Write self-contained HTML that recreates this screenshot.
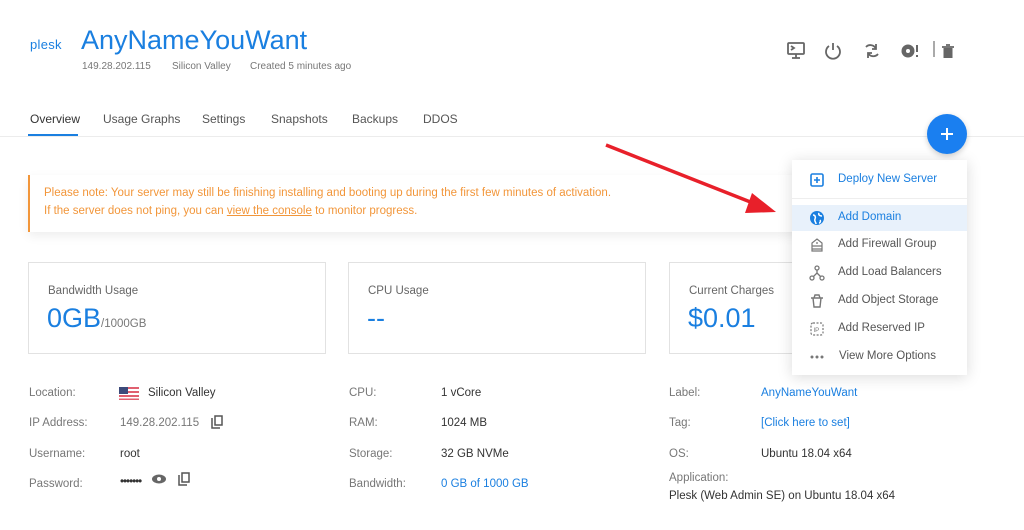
<!DOCTYPE html>
<html><head><meta charset="utf-8"><style>
*{margin:0;padding:0;box-sizing:border-box}
body{width:1024px;height:530px;overflow:hidden;background:#fff;font-family:"Liberation Sans",sans-serif;position:relative;color:#333}
.a{position:absolute;white-space:nowrap}
.g{color:#777}
.b{color:#1a7fe0}
.tab{position:absolute;top:112px;font-size:12px;color:#555}
.card{position:absolute;top:262px;width:298px;height:92px;border:1px solid #e2e2e2;background:#fff}
.card .l{position:absolute;left:19px;top:22px;font-size:11.5px;color:#666}
.card .v{position:absolute;left:18px;top:40px;font-size:27px;color:#1a7fe0}
.r{position:absolute;font-size:11.5px}
.lab{color:#777}
.menu{position:absolute;left:792px;top:160px;width:175px;height:215px;background:#fff;box-shadow:0 2px 14px rgba(0,0,0,.15)}
.mi{position:absolute;left:0;width:175px;height:26px;font-size:11.5px;color:#555}
.mi span{position:absolute;left:46px;top:6px}
.mi svg{position:absolute;left:17px;top:5px}
</style></head><body>
<div class="a b" style="left:30px;top:37px;font-size:13px;letter-spacing:.3px">plesk</div>
<div class="a b" style="left:81px;top:25px;font-size:27px">AnyNameYouWant</div>
<div class="a g" style="left:82px;top:61px;font-size:10px">149.28.202.115</div>
<div class="a g" style="left:172px;top:61px;font-size:10px">Silicon Valley</div>
<div class="a g" style="left:250px;top:61px;font-size:10px">Created 5 minutes ago</div>

<svg class="a" style="left:786px;top:41px" width="180" height="20" fill="none" stroke="#666" stroke-width="1.8">
<rect x="2" y="2" width="16" height="11" rx="1"/><path d="M10 13v4M6 17h8M5 5l3 2-3 2"/>
<path d="M43 5a7 7 0 1 0 8 0M47 2v7"/>
<path d="M80 6a6 6 0 0 1 10 2M92 13a6 6 0 0 1-10-1M90 3v5h-4M82 17v-5h4"/>
<circle cx="122" cy="10" r="6.5" fill="#666" stroke="none"/><circle cx="122" cy="10" r="2" fill="#fff" stroke="none"/><path d="M131 4v7M131 14v2" stroke-width="2"/>
<path d="M148 0v16" stroke="#555" stroke-width="1"/>
<path d="M156 6h12M160 4h4" /><rect x="157.5" y="7" width="9" height="10" fill="#666" stroke="none"/>
</svg>

<div class="tab" style="left:30px;color:#333">Overview</div>
<div class="tab" style="left:103px">Usage Graphs</div>
<div class="tab" style="left:202px">Settings</div>
<div class="tab" style="left:271px">Snapshots</div>
<div class="tab" style="left:352px">Backups</div>
<div class="tab" style="left:423px">DDOS</div>
<div class="a" style="left:0;top:136px;width:1024px;height:1px;background:#ececec"></div>
<div class="a" style="left:28px;top:134px;width:50px;height:2px;background:#1a7fe0"></div>

<div class="a" style="left:28px;top:175px;width:790px;height:57px;background:#fff;border-left:2px solid #f2963a;box-shadow:0 4px 10px rgba(0,0,0,.07);font-size:11.5px;color:#f2963a;line-height:18px;padding:9px 0 0 14px">Please note: Your server may still be finishing installing and booting up during the first few minutes of activation.<br>If the server does not ping, you can <u>view the console</u> to monitor progress.</div>

<div class="card" style="left:28px"><div class="l">Bandwidth Usage</div><div class="v">0GB<span style="font-size:11.5px;color:#777">/1000GB</span></div></div>
<div class="card" style="left:348px"><div class="l">CPU Usage</div><div class="v">--</div></div>
<div class="card" style="left:669px"><div class="l">Current Charges</div><div class="v">$0.01</div></div>

<div class="r lab" style="left:29px;top:387px">Location:</div>
<svg class="a" style="left:119px;top:387px" width="20" height="13"><rect width="20" height="13" fill="#fff"/><g fill="#e06070"><rect y="0" width="20" height="2"/><rect y="4" width="20" height="2"/><rect y="8" width="20" height="2"/><rect y="11.5" width="20" height="1.5"/></g><rect width="9" height="7" fill="#3c4a7a"/></svg>
<div class="r" style="left:148px;top:387px">Silicon Valley</div>
<div class="r lab" style="left:29px;top:417px">IP Address:</div>
<div class="r g" style="left:120px;top:417px">149.28.202.115</div>
<svg class="a" style="left:210px;top:415px" width="14" height="15" fill="none" stroke="#555" stroke-width="1.5"><path d="M2 3v10h8"/><rect x="5" y="1" width="7" height="9"/></svg>
<div class="r lab" style="left:29px;top:448px">Username:</div>
<div class="r" style="left:120px;top:448px">root</div>
<div class="r lab" style="left:29px;top:478px">Password:</div>
<div class="r" style="left:120px;top:476px;letter-spacing:-1px">•••••••</div>
<svg class="a" style="left:152px;top:474px" width="14" height="10"><ellipse cx="7" cy="5" rx="7" ry="4.5" fill="#666"/><circle cx="7" cy="5" r="2" fill="#fff"/></svg>
<svg class="a" style="left:177px;top:472px" width="14" height="15" fill="none" stroke="#555" stroke-width="1.5"><path d="M2 3v10h8"/><rect x="5" y="1" width="7" height="9"/></svg>

<div class="r lab" style="left:349px;top:387px">CPU:</div><div class="r" style="left:441px;top:387px">1 vCore</div>
<div class="r lab" style="left:349px;top:417px">RAM:</div><div class="r" style="left:441px;top:417px">1024 MB</div>
<div class="r lab" style="left:349px;top:448px">Storage:</div><div class="r" style="left:441px;top:448px">32 GB NVMe</div>
<div class="r lab" style="left:349px;top:478px">Bandwidth:</div><div class="r b" style="left:441px;top:478px">0 GB of 1000 GB</div>

<div class="r lab" style="left:669px;top:387px">Label:</div><div class="r b" style="left:761px;top:387px">AnyNameYouWant</div>
<div class="r lab" style="left:669px;top:417px">Tag:</div><div class="r b" style="left:761px;top:417px">[Click here to set]</div>
<div class="r lab" style="left:669px;top:448px">OS:</div><div class="r" style="left:761px;top:448px">Ubuntu 18.04 x64</div>
<div class="r lab" style="left:669px;top:472px">Application:</div>
<div class="r" style="left:669px;top:490px">Plesk (Web Admin SE) on Ubuntu 18.04 x64</div>

<svg class="a" style="left:0;top:0" width="1024" height="530"><line x1="606" y1="145" x2="758" y2="205" stroke="#e8202a" stroke-width="3.5"/><polygon points="776,212 752,193 745,213" fill="#e8202a"/></svg>

<div class="menu">
<div class="mi" style="top:7px;color:#1a7fe0"><svg width="16" height="16" fill="none" stroke="#1a7fe0" stroke-width="1.6"><rect x="2" y="2" width="12" height="12" rx="1.5"/><path d="M8 5v6M5 8h6"/></svg><span>Deploy New Server</span></div>
<div class="a" style="left:0;top:38px;width:175px;height:1px;background:#eee"></div>
<div class="mi" style="top:45px;background:#e8f1fb;color:#1a7fe0"><svg width="16" height="16"><circle cx="8" cy="8" r="7" fill="#1a7fe0"/><path d="M4 5c2 0 3 2 2 4s1 3 1 5M10 3c-1 2 1 3 3 3M11 10c1 1 0 3-1 3" stroke="#fff" stroke-width="1.5" fill="none"/></svg><span>Add Domain</span></div>
<div class="mi" style="top:72px"><svg width="16" height="16" fill="none" stroke="#777" stroke-width="1.2"><path d="M3 14V6l5-4 5 4v8zM3 9h10M3 12h10M7 6h2"/></svg><span>Add Firewall Group</span></div>
<div class="mi" style="top:100px"><svg width="16" height="16" fill="none" stroke="#777" stroke-width="1.3"><circle cx="8" cy="3" r="2"/><circle cx="3" cy="13" r="2"/><circle cx="13" cy="13" r="2"/><path d="M8 5v3l-4 4M8 8l4 4"/></svg><span>Add Load Balancers</span></div>
<div class="mi" style="top:128px"><svg width="16" height="16" fill="none" stroke="#777" stroke-width="1.4"><path d="M2 5h12M4 5l1 9h6l1-9M5 5l1-3h4l1 3"/></svg><span>Add Object Storage</span></div>
<div class="mi" style="top:156px"><svg width="16" height="16" fill="none" stroke="#777" stroke-width="1.2"><rect x="2" y="2" width="12" height="12" rx="2" stroke-dasharray="2 1.5"/><text x="4.5" y="11" font-size="6" fill="#777" stroke="none" font-family="Liberation Sans">IP</text></svg><span>Add Reserved IP</span></div>
<div class="mi" style="top:184px"><svg width="16" height="16" fill="#777"><circle cx="3" cy="8" r="1.5"/><circle cx="8" cy="8" r="1.5"/><circle cx="13" cy="8" r="1.5"/></svg><span style="left:47px">View More Options</span></div>
</div>

<div class="a" style="left:927px;top:114px;width:40px;height:40px;border-radius:50%;background:#1a7ff0;box-shadow:0 2px 6px rgba(0,0,0,.2)"><svg width="40" height="40"><path d="M20 14v12M14 20h12" stroke="#fff" stroke-width="2"/></svg></div>
</body></html>
